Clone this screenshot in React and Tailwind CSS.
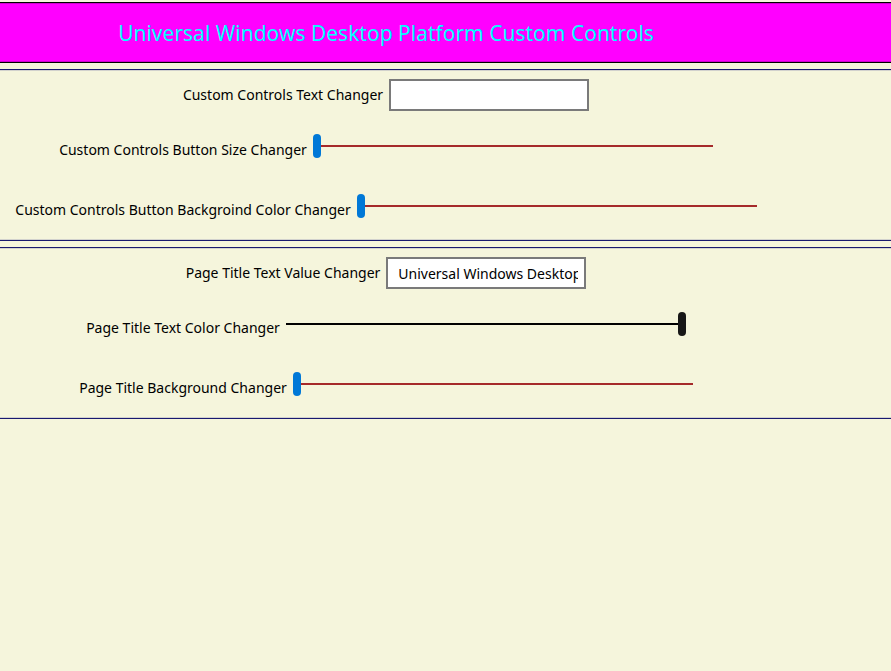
import { useState } from "react";

function Row({ id, label, children }) {
  return (
    <div className="flex h-15 items-center justify-center gap-1.5 pr-[119px] first:h-[50px]">
      <label htmlFor={id} className="whitespace-nowrap text-sm">
        {label}
      </label>
      {children}
    </div>
  );
}

function TextRow({ id, label, value, onChange }) {
  return (
    <Row id={id} label={label}>
      <input
        id={id}
        type="text"
        value={value}
        onChange={(e) => onChange(e.target.value)}
        className="h-8 w-[200px] border-2 border-[#7a7a7a] bg-white pr-1.5 pl-2.5 text-sm outline-none"
      />
    </Row>
  );
}

const blueSlider =
  "[&::-webkit-slider-runnable-track]:bg-[#a52a2a] [&::-webkit-slider-thumb]:bg-[#0078d7]";
const blackSlider =
  "[&::-webkit-slider-runnable-track]:bg-black [&::-webkit-slider-thumb]:bg-[#171717]";

function SliderRow({ id, label, initial = 0, tone = blueSlider }) {
  return (
    <Row id={id} label={label}>
      <input
        id={id}
        type="range"
        min="0"
        max="100"
        defaultValue={initial}
        className={`mb-2 h-6 w-[400px] appearance-none bg-transparent outline-none [&::-webkit-slider-runnable-track]:h-0.5 [&::-webkit-slider-thumb]:-mt-[11px] [&::-webkit-slider-thumb]:h-6 [&::-webkit-slider-thumb]:w-2 [&::-webkit-slider-thumb]:appearance-none [&::-webkit-slider-thumb]:rounded-[4px] ${tone}`}
      />
    </Row>
  );
}

function Panel({ children }) {
  return (
    <section className="border-y border-[#191970] shadow-[inset_0_1px_0_#d2d2cd,inset_0_-1px_0_#d2d2cd]">
      {children}
    </section>
  );
}

export default function App() {
  const [text, setText] = useState("");
  const [title, setTitle] = useState("Universal Windows Desktop Platform Custom Controls");

  return (
    <main className="flex min-h-screen flex-col gap-1.5 bg-[#f5f5dc] pt-0.5 font-['Noto_Sans','Open_Sans',sans-serif] text-black">
      <header className="flex h-[61px] items-center justify-center border-y border-black bg-[#ff00ff] pt-0.5 pr-[119px] shadow-[inset_0_1px_0_#d000d0,inset_0_-1px_0_#d000d0]">
        <h1 className="whitespace-nowrap text-[21px] text-[#00ffff]">{title}</h1>
      </header>
      <Panel>
        <TextRow id="control-text" label="Custom Controls Text Changer" value={text} onChange={setText} />
        <SliderRow id="button-size" label="Custom Controls Button Size Changer" />
        <SliderRow id="button-background" label="Custom Controls Button Backgroind Color Changer" />
      </Panel>
      <Panel>
        <TextRow id="title-text" label="Page Title Text Value Changer" value={title} onChange={setTitle} />
        <SliderRow id="title-color" label="Page Title Text Color Changer" initial={100} tone={blackSlider} />
        <SliderRow id="title-background" label="Page Title Background Changer" />
      </Panel>
    </main>
  );
}
